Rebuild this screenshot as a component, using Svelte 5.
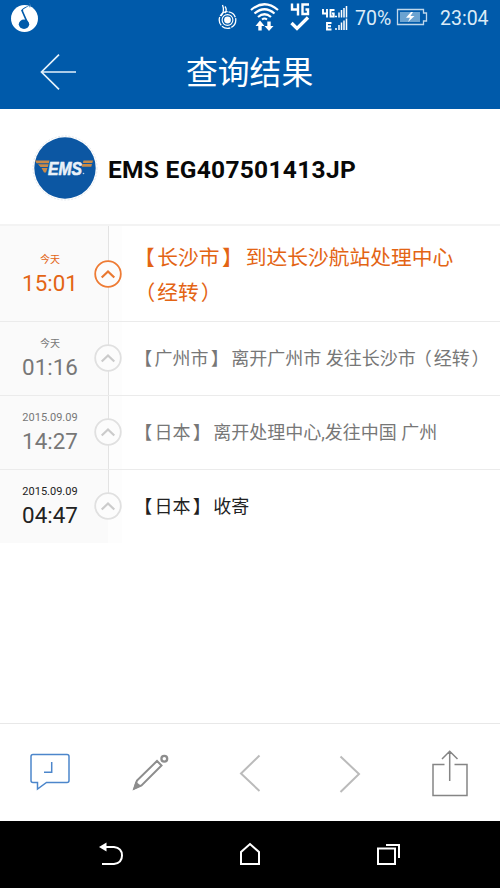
<script>
  const events = [
    { day: '今天', time: '15:01', place: '长沙市', lines: ['到达长沙航站处理中心'], note: '经转', kind: 'latest' },
    { day: '今天', time: '01:16', place: '广州市', lines: ['离开广州市 发往长沙市'], note: '经转', kind: 'past' },
    { day: '2015.09.09', time: '14:27', place: '日本', lines: ['离开处理中心,发往中国 广州'], kind: 'past' },
    { day: '2015.09.09', time: '04:47', place: '日本', lines: ['收寄'], kind: 'first' }
  ];
</script>

<div class="screen">
  <header>
    <div class="status">
      <svg class="statusicons" width="350" height="38" viewBox="0 0 350 38" fill="none" stroke="#fff">
        <circle cx="24.500" cy="18.500" r="13.500" fill="#fff" stroke="none" />
        <path d="M29.500 3L30.500 4V9L25 13V11L29 8Z" fill="#fff" stroke="none" />
        <path d="M30.500 2L29.500 6.500Q24 8 22 10.500L27.500 23" stroke="#005aaa" stroke-width="1.700" />
        <path d="M23 9.500L29.500 5.500V8L24.500 11Z" fill="#fff" stroke="none" />
        <ellipse cx="24" cy="24.300" rx="5.200" ry="4.700" fill="#005aaa" stroke="none" />
        <circle cx="227.500" cy="20" r="3.400" fill="#fff" stroke="none" />
        <circle cx="227.500" cy="20" r="5.400" stroke-width="1.100" />
        <circle cx="227.500" cy="20" r="8.300" stroke-width="1.300" stroke-dasharray="9 1" />
        <path d="M221 16Q225 11 222.500 5M225 13Q227.500 10 225 6.500" stroke-width="1.300" />
        <path d="M251 10Q264.500-1.500 278 10M254.500 13.500Q264.500 5 274.500 13.500M258 17Q264.500 11.500 271 17" stroke-width="2.200" />
        <path d="M262 19.500Q264.500 17.500 267 19.500" stroke-width="2" />
        <path d="M260 20.500L255.500 26H258.300V30.500H261.700V26H264.500ZM269 31L264.500 26H267.300V21.500H270.700V26H273.500Z" fill="#fff" stroke="none" />
        <path d="M292 3.500V9.500H299M298 3.500V15.500M309 4.500H302.500V14H308V9.500H305.500" stroke-width="2.400" />
        <path d="M291.500 23L297 28.500L308 17.500" stroke-width="3.300" />
        <path d="M323 9V13.500H328M327 9V17.500M334.500 10H330.500V16.500H333.700V13.500H332" stroke-width="1.900" />
        <path d="M331.500 23H327V29.500H331.500M327 26.200H331" stroke-width="1.900" />
        <path d="M335 16.500H337M339 17.500V12.500M341.500 17.500V10M344 17.500V8M346.500 17.500V6M335 29H337M339 30V25M341.500 30V22.500M344 30V20.500M346.500 30V18.500" stroke-width="1.500" />
      </svg>
      <span class="percent">70%</span>
      <svg class="battery" width="34" height="20" viewBox="0 0 34 20">
        <path d="M1.500 2.500H27.500V6H30.500V14H27.500V17.500H1.500Z" fill="none" stroke="#bfd7eb" stroke-width="1.300" />
        <path d="M4 5H24V15H4Z" fill="#6ba3d1" />
        <path d="M15 5L10 10.700H14L12 15L18.500 9H14.500L17 5Z" fill="#fff" />
      </svg>
      <span class="clock">23:04</span>
    </div>
    <div class="bar">
      <svg class="back" width="36" height="36" viewBox="0 0 36 36" fill="none" stroke="#e4f1fb" stroke-width="1.700">
        <path d="M19 .700L1.500 18L19 35.300M1.500 18H36" />
      </svg>
      <h1>查询结果</h1>
    </div>
  </header>

  <section class="parcel">
    <svg width="66" height="66" viewBox="0 0 66 66">
      <circle cx="33" cy="33" r="32" fill="#fff" stroke="#d5dde4" stroke-width=".7" stroke-dasharray="2 1.500" />
      <circle cx="33" cy="33" r="30.700" fill="#0c57a3" />
      <path d="M3 25.500H17.500L16.800 28.200H4.500ZM6 29.200H16.600L15.800 32H8.500ZM9.500 33H15.500L14 37.500H12ZM51.500 25.500H61L60.300 28H50.800ZM50.500 29H60L59.300 31.800H49.800Z" fill="#c98a48" />
      <text x="16" y="39.500" class="ems" textLength="34" lengthAdjust="spacingAndGlyphs">EMS</text>
      <circle cx="51.500" cy="38.500" r=".8" fill="#b9d0e6" />
    </svg>
    <h2>EMS EG407501413JP</h2>
  </section>

  <ol>
    {#each events as e}
      <li class={e.kind}>
        <div class="when">
          <span class="day" class:cn={e.day === '今天'}>{e.day}</span>
          <span class="time">{e.time}</span>
        </div>
        <div class="rail">
          <svg width="28" height="28" viewBox="0 0 28 28" fill="none">
            <circle class="ring" cx="14" cy="14" r="12.800" />
            <path class="chev" d="M7.700 17.500L14 11.500L20.300 17.500" />
          </svg>
        </div>
        <p><span class="open">【</span>{e.place}<span class="close">】</span><span class="gap"></span>{e.lines[0]}{#if e.kind === 'latest'}<br />{/if}{#if e.note}<span class="po">（</span>{e.note}<span class="pc">）</span>{/if}</p>
      </li>
    {/each}
  </ol>

  <footer>
    <svg width="500" height="97" viewBox="0 0 500 97" fill="none">
      <g stroke="#4c86cb" stroke-width="1.500">
        <path d="M33 30.500H67Q69 30.500 69 32.500V56.500Q69 58.500 67 58.500H46.500L37.500 65V58.500H33Q31 58.500 31 56.500V32.500Q31 30.500 33 30.500Z" />
        <path d="M51.700 38V48.300H44" />
      </g>
      <g stroke="#8d8d8d">
        <path d="M134.500 64.500L137 56.500L157 37L161.500 41.500L141.500 61.500Z" stroke-width="2" />
        <path d="M132.500 66.500L135.500 57.500L141.500 62Z" fill="#8d8d8d" stroke="none" />
        <path d="M158.500 34.500L163.800 39.800" stroke="#fff" stroke-width="1" />
        <circle cx="164.300" cy="34.800" r="2.900" stroke-width="2.300" />
      </g>
      <path d="M259.500 31.500L241 49.500L259.500 67M340.500 32.500L359 50L340.500 68" stroke="#bbb" stroke-width="2" />
      <path d="M444.500 40.500H433V71.500H467V40.500H454.500M449.700 57V27M442 35L449.700 27.300L457.500 35" stroke="#858585" stroke-width="1.500" />
    </svg>
  </footer>

  <nav>
    <svg width="500" height="67" viewBox="0 0 500 67" fill="none" stroke="#fff" stroke-width="2">
      <path d="M102 43H114Q122 42 122 34.500Q122 27 114 26H105" />
      <path d="M99 26L106.500 21.500V30.500Z" fill="#fff" stroke="none" />
      <path d="M241 43V31L250 23L259 31V43Z" />
      <path d="M378 27.500H395V43H378Z" />
      <path d="M386 24H399V37" />
    </svg>
  </nav>
</div>

<style>
  :global(body) { margin: 0; background: #fff; }
  .screen {
    width: 500px; height: 888px; display: flex; flex-direction: column; overflow: hidden;
    background: #fff; font-family: Roboto, "Noto Sans CJK SC", sans-serif;
  }
  header { flex: none; height: 109px; background: #005aaa; color: #fff; }
  .status { height: 38px; display: flex; align-items: center; }
  .status svg { flex: none; }
  .percent, .clock { font-size: 19.5px; line-height: 38px; color: #dcebf7; height: 38px; }
  .percent { width: 40px; margin-left: 5px; }
  .battery { margin: -4px 0 0 1px; }
  .clock { margin-left: 10px; }
  .bar { height: 71px; display: flex; align-items: center; padding-left: 40px; }
  .back { margin-top: -3px; }
  h1 { margin: -1px 0 0 110px; font-size: 31.8px; font-weight: 400; line-height: 44px; }

  .parcel {
    flex: none; box-sizing: border-box; height: 117px; border-bottom: 2px solid #f3f3f3;
    display: flex; align-items: center; padding: 2px 0 0 32px;
  }
  .ems { font: italic 700 17.5px "Liberation Sans", sans-serif; fill: #e9f1f8; stroke: #e9f1f8; stroke-width: .6px; }
  h2 { margin: 4px 0 0 10px; font-size: 24.5px; letter-spacing: .3px; font-weight: 700; line-height: 30px; color: #080808; white-space: nowrap; }

  ol { flex: none; margin: 0; padding: 0; list-style: none; }
  li { box-sizing: border-box; height: 74px; display: flex; border-bottom: 1px solid #ebebeb; color: #777; }
  li.latest { height: 96px; color: #e36414; }
  li.first { height: 73px; border-bottom: 0; color: #222; }
  .when {
    width: 94px; background: #fafafa; display: flex; flex-direction: column; justify-content: center;
    box-sizing: border-box; padding: 3px 0 0 6px; text-align: center;
  }
  .latest .when { padding-top: 4px; }
  .day { font-size: 11px; line-height: 14px; white-space: nowrap; }
  .day.cn { font-size: 10px; }
  .time { font-size: 22.4px; line-height: 32px; white-space: nowrap; }
  .rail {
    width: 28px; display: flex; align-items: center; flex: none;
    background: linear-gradient(90deg, #fafafa 14px, #e3e3e3 14px, #e3e3e3 15px, #fdfdfd 15px);
  }
  .rail svg { margin-top: -1px; }
  .latest .rail svg { margin-top: 0; }
  .first .rail {
    background: linear-gradient(90deg, transparent 14px, #e3e3e3 14px, #e3e3e3 15px, transparent 15px) 0 0 / 28px 36px no-repeat,
      linear-gradient(90deg, #fafafa 14px, #fdfdfd 14px);
  }
  .ring { fill: #fcfcfc; stroke: #e0e0e0; stroke-width: 1.8; }
  .chev { stroke: #cbcbcb; stroke-width: 2.2; }
  .latest .ring { stroke: #ee7b34; }
  .latest .chev { stroke: #e97830; }
  p { margin: 0; padding-left: 14.5px; align-self: center; font-size: 18px; line-height: 30px; white-space: nowrap; }
  .latest p { font-size: 20.75px; line-height: 35px; padding-top: 4px; }
  .open { margin: 0 .12em 0 -.12em; }
  .close { margin: 0 -.12em 0 .12em; }
  .gap { display: inline-block; width: .26em; }
  .po { margin: 0 .1em 0 -.1em; }
  .pc { margin: 0 -.1em 0 .1em; }

  footer { flex: none; box-sizing: border-box; margin-top: auto; height: 98px; border-top: 1px solid #e8e8e8; }
  nav { flex: none; height: 67px; background: #000; }
  footer svg, nav svg { display: block; }
</style>
